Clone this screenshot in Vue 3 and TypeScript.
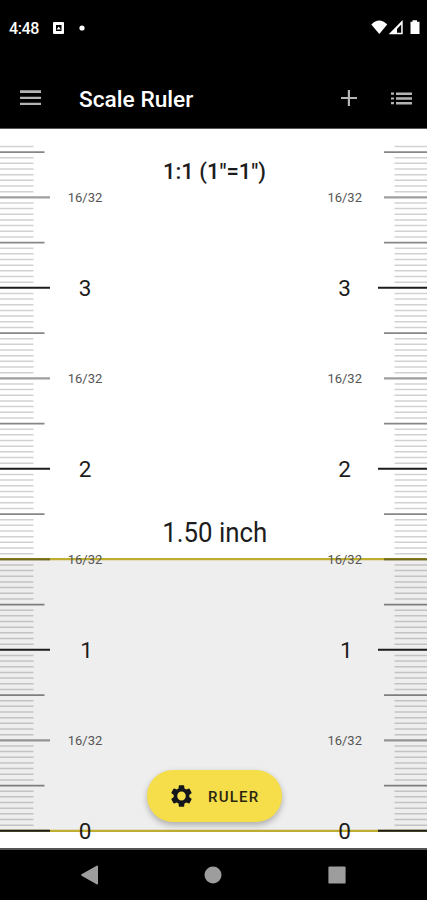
<script setup lang="ts">
interface Tick {
  y: number
  left: number
  right: number
  color: string
  width: number
}

interface Label {
  y: number
  text: string
  major: boolean
  shift: number
}

// Coordinates inside the ruler canvas, which begins under the app bar.
const zeroY = 702.8
const inch = 181
const measured = 1.5
const measuredY = zeroY - measured * inch - 0.1

const ticks: Tick[] = []
for (let i = 0; i <= 121; i++) {
  const y = zeroY - (i * inch) / 32
  if (i % 32 === 0) ticks.push({ y, left: 50, right: 378, color: '#1c1c1c', width: 2 })
  else if (i % 16 === 0) ticks.push({ y, left: 50, right: 384, color: 'rgba(0,0,0,.38)', width: 2.3 })
  else if (i % 8 === 0) ticks.push({ y, left: 44.5, right: 384, color: 'rgba(0,0,0,.47)', width: 1.8 })
  else ticks.push({ y, left: 33.5, right: 394.5, color: 'rgba(0,0,0,.18)', width: 1.5 })
}

const labels: Label[] = []
for (let h = 0; h <= 7; h++) {
  const major = h % 2 === 0
  labels.push({
    y: zeroY - (h * inch) / 2 + (major ? 8.2 : 4.9),
    text: major ? String(h / 2) : '16/32',
    major,
    shift: h === 2 ? 1.6 : 0,
  })
}
</script>

<template>
  <div class="screen">
    <div class="status">
      <span class="clock">4:48</span>
      <svg class="note" width="11" height="12" viewBox="0 0 11 12">
        <path fill="#fff" fill-rule="evenodd" d="M1 0h9q1 0 1 1v10q0 1-1 1H1q-1 0-1-1V1q0-1 1-1zM3 3v6h5.5V3z" />
        <path fill="#fff" d="M3.6 7.6 5.7 4.4 7.8 7.6z" />
      </svg>
      <svg class="dot" width="6" height="6" viewBox="0 0 6 6"><circle cx="3" cy="3" r="2.6" fill="#fff" /></svg>
      <svg class="signals" width="50" height="16" viewBox="0 0 50 16">
        <path fill="#fff" d="M.3 4.500Q8.200-3.400 16.200 4.500L8.300 14Z" />
        <path fill="#fff" fill-rule="evenodd" d="M17.700 14.200 31.700 0v14.200zM26 12.700h4.200V4.500l-4.200 4.500z" />
        <path fill="#fff" d="M39.500 1.800h2V.2h4.500v1.600h2.500v12.200h-9z" />
      </svg>
    </div>

    <header class="bar">
      <svg class="menu" width="21" height="16" viewBox="0 0 21 16">
        <path fill="#b4b4b4" d="M0 .2h21v2.800H0zM0 6.700h21v2.300H0zM0 12.700h21v2.300H0z" />
      </svg>
      <h1 class="title">Scale Ruler</h1>
      <svg class="plus" width="16" height="16" viewBox="0 0 16 16">
        <path fill="#b4b4b4" d="M6.8 0h2.200v6.900H16v2.200H9V16H6.800V9.100H0V6.900h6.800z" />
      </svg>
      <svg class="list" width="21" height="13" viewBox="0 0 21 13">
        <path fill="#b4b4b4" d="M0 .6h3v2.200H0zM5 .4h16v2.500H5zM0 5.400h3v2.200H0zM5 5.300h16v2.400H5zM0 10.100h3v2.200H0zM5 10h16v2.500H5z" />
      </svg>
    </header>

    <main class="canvas">
      <svg class="ruler" width="427" height="720" viewBox="0 0 427 720">
        <rect x="0" :y="measuredY" width="427" :height="zeroY - measuredY" fill="#eee" />
        <path :d="`M0 ${measuredY}H427M0 ${zeroY}H427`" stroke="#bead30" stroke-width="2.3" />
        <path
          v-for="(t, i) in ticks"
          :key="i"
          :d="`M0 ${t.y}H${t.left}M${t.right} ${t.y}H427`"
          :stroke="t.color"
          :stroke-width="t.width"
        />
        <g v-for="(l, i) in labels" :key="'l' + i" :class="l.major ? 'major' : 'minor'">
          <text :x="85 + l.shift" :y="l.y">{{ l.text }}</text>
          <text :x="344.7 + l.shift" :y="l.y">{{ l.text }}</text>
        </g>
        <text class="scale" x="214.500" y="50.500">1:1 (1"=1")</text>
        <text class="reading" x="214.800" y="414" textLength="105" lengthAdjust="spacingAndGlyphs">1.50 inch</text>
      </svg>
      <button class="fab">
        <svg width="25" height="26" viewBox="0 0 24 24" preserveAspectRatio="none">
          <path
            fill="#14161b"
            fill-rule="evenodd"
            d="M19.43 12.98c.04-.32.07-.64.07-.98s-.03-.66-.07-.98l2.11-1.65c.19-.15.24-.42.12-.64l-2-3.46c-.12-.22-.39-.3-.61-.22l-2.49 1c-.52-.4-1.08-.73-1.69-.98l-.38-2.65C14.46 2.18 14.25 2 14 2h-4c-.25 0-.46.18-.49.42l-.38 2.65c-.61.25-1.17.59-1.69.98l-2.49-1c-.23-.09-.49 0-.61.22l-2 3.46c-.13.22-.07.49.12.64l2.11 1.65c-.04.32-.07.65-.07.98s.03.66.07.98l-2.11 1.65c-.19.15-.24.42-.12.64l2 3.46c.12.22.39.3.61.22l2.49-1c.52.4 1.08.73 1.69.98l.38 2.65c.03.24.24.42.49.42h4c.25 0 .46-.18.49-.42l.38-2.65c.61-.25 1.17-.59 1.69-.98l2.49 1c.23.09.49 0 .61-.22l2-3.46c.12-.22.07-.49-.12-.64l-2.11-1.65zM12 16.1a4.1 4.1 0 1 1 0-8.2 4.1 4.1 0 0 1 0 8.2z"
          />
        </svg>
        <span>RULER</span>
      </button>
    </main>

    <nav class="nav">
      <svg width="17" height="20" viewBox="0 0 17 20"><path fill="#9d9d9d" d="M15.6.8Q17 0 17 1.500v17q0 1.500-1.400.7L.6 10.700Q-.3 10 .6 9.300z" /></svg>
      <svg width="18" height="18" viewBox="0 0 18 18"><circle cx="9" cy="9" r="8.500" fill="#9d9d9d" /></svg>
      <svg width="18" height="18" viewBox="0 0 18 18"><rect x=".4" y=".4" width="17.200" height="17.200" rx="1.200" fill="#9d9d9d" /></svg>
    </nav>
  </div>
</template>

<style>
body {
  background: #000;
}
</style>

<style scoped>
.screen {
  width: 427px;
  height: 900px;
  display: flex;
  flex-direction: column;
  overflow: hidden;
  background: #000;
  font-family: Roboto, "Liberation Sans", sans-serif;
}
.status {
  height: 55px;
  box-sizing: border-box;
  padding: 0 6px 0 9px;
  display: flex;
  align-items: center;
  color: #fff;
}
.clock {
  width: 44px;
  padding-top: 1px;
  font-size: 16px;
  font-weight: 500;
  letter-spacing: -0.4px;
}
.dot {
  margin-left: 15px;
}
.signals {
  margin-left: auto;
}
.bar {
  height: 74px;
  box-sizing: border-box;
  padding: 16px 15px 3px 20px;
  display: flex;
  align-items: center;
  border-bottom: 1px solid #555;
}
.title {
  margin: 3px 0 0 38px;
  flex: 1;
  color: #fff;
  font-size: 22.7px;
  line-height: 28px;
  font-weight: 500;
}
.plus {
  margin-right: 34px;
}
.canvas {
  height: 720px;
  margin-top: -1px;
  position: relative;
  flex: none;
}
.ruler {
  display: block;
  margin-top: 0;
  background: linear-gradient(#555 1px, #fff 1px);
}
text {
  text-anchor: middle;
  fill: #1c1c1c;
}
.major {
  font-size: 22.5px;
}
.minor {
  font-size: 13px;
}
.minor text {
  fill: #555;
}
.scale {
  font-size: 22px;
  font-weight: 500;
}
.reading {
  font-size: 27px;
}
.fab {
  position: absolute;
  left: 147px;
  top: 642px;
  width: 135px;
  height: 52px;
  padding: 0 0 0 22px;
  display: flex;
  align-items: center;
  gap: 14px;
  border: 0;
  border-radius: 26px;
  background: #f5de4a;
  color: #29260f;
  font: 500 15px Roboto, "Liberation Sans", sans-serif;
  letter-spacing: 1.2px;
  box-shadow: 0 3px 6px rgba(0, 0, 0, 0.28);
}
.fab span {
  padding-top: 1px;
}
.nav {
  flex: 1;
  box-sizing: border-box;
  padding: 0 81px;
  border-top: 2px solid #555;
  display: flex;
  align-items: center;
  justify-content: space-between;
}
</style>
